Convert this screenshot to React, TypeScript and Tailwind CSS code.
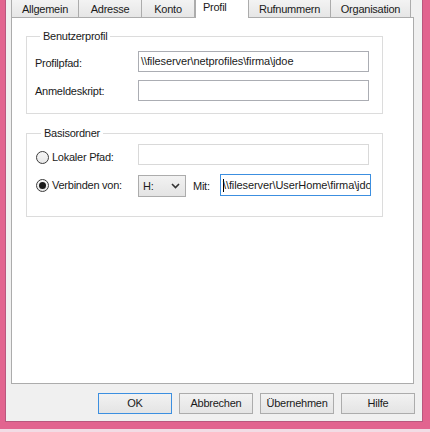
import React from "react";

const font = "font-['Liberation_Sans',Arial,sans-serif] text-[11px] tracking-[-0.25px] text-[#1a1a1a]";

function Tab({ label, w, active }: { label: string; w: string; active?: boolean }) {
  if (active) {
    return (
      <div
        className={`${w} h-[18px] -mb-px relative z-10 bg-white border-x border-[#acacac] flex justify-start pl-[7px] pt-[1px] leading-[13px]`}
      >
        {label}
      </div>
    );
  }
  return (
    <div
      className={`${w} h-[17px] bg-gradient-to-b from-[#f3f3f3] to-[#e6e6e6] border-r border-[#acacac] flex justify-center pt-[3px] leading-[13px]`}
    >
      {label}
    </div>
  );
}

function TextBox({ value, w, disabled }: { value?: string; w: string; disabled?: boolean }) {
  return (
    <div
      className={`${w} h-[21px] bg-white border ${disabled ? "border-[#d9d9d9]" : "border-[#abadb3]"} flex items-center pl-[2px] leading-[13px] tracking-[-0.1px] overflow-hidden whitespace-nowrap`}
    >
      {value}
    </div>
  );
}

function Radio({ checked }: { checked?: boolean }) {
  return (
    <div className="w-[13px] h-[13px] rounded-full border border-[#3c3c3c] bg-gradient-to-b from-[#f6f6f6] to-[#e8e8e8] flex items-center justify-center shrink-0">
      {checked ? <div className="w-[7px] h-[7px] rounded-full bg-[#1a1a1a]" /> : null}
    </div>
  );
}

function Button({ label, def }: { label: string; def?: boolean }) {
  return (
    <div
      className={`w-[74px] h-[21px] border ${def ? "border-[#3c8fe0]" : "border-[#acacac]"} bg-gradient-to-b from-[#f2f2f2] to-[#e4e4e4] flex items-center justify-center leading-[13px]`}
    >
      {label}
    </div>
  );
}

export default function App() {
  return (
    <div className={`w-[430px] h-[432px] bg-[#e2648f] flex flex-col ${font}`}>
      <div className="ml-[5px] w-[418px] h-[422px] bg-[#f0f0f0] border-x border-b border-[#b9587e] flex flex-col">
        <div className="pl-[5px] flex flex-col">
          {/* Tabs */}
          <div className="flex items-end h-[17px]">
            <div className="border-l border-[#acacac] h-[17px]" />
            <Tab label="Allgemein" w="w-[67px]" />
            <Tab label="Adresse" w="w-[63px]" />
            <Tab label="Konto" w="w-[53px]" />
            <Tab label="Profil" w="w-[54px]" active />
            <Tab label="Rufnummern" w="w-[82px]" />
            <Tab label="Organisation" w="w-[80px]" />
          </div>
          {/* Panel */}
          <div className="w-[403px] h-[367px] bg-white border border-[#acacac] flex flex-col pl-[14px]">
            <fieldset className="w-[357px] mt-[12px] border border-[#dcdcdc] pl-[8px] pt-[8px] pb-[12px] flex flex-col gap-[8px]">
              <legend className="ml-[5px] px-[3px] leading-[13px]">Benutzerprofil</legend>
              <div className="flex items-center">
                <div className="w-[103px] pt-[3px] leading-[13px]">Profilpfad:</div>
                <TextBox w="w-[231px]" value={"\\\\fileserver\\netprofiles\\firma\\jdoe"} />
              </div>
              <div className="flex items-center">
                <div className="w-[103px] pt-[2px] leading-[13px]">Anmeldeskript:</div>
                <TextBox w="w-[231px]" />
              </div>
            </fieldset>
            <fieldset className="w-[357px] mt-[13px] border border-[#dcdcdc] pl-[9px] pt-[4px] pb-[19px] flex flex-col gap-[8px]">
              <legend className="ml-[5px] px-[3px] leading-[13px]">Basisordner</legend>
              <div className="flex items-center">
                <div className="w-[102px] flex items-center gap-[3px] pt-[5px]">
                  <Radio />
                  <span className="leading-[13px]">Lokaler Pfad:</span>
                </div>
                <TextBox w="w-[231px]" disabled />
              </div>
              <div className="flex items-center">
                <div className="w-[102px] flex items-center gap-[3px] pt-[1px]">
                  <Radio checked />
                  <span className="leading-[13px]">Verbinden von:</span>
                </div>
                <div className="w-[48px] h-[22px] mt-[2px] border border-[#acacac] bg-gradient-to-b from-[#f2f2f2] to-[#e4e4e4] flex items-center pl-[4px] pr-[5px] justify-between">
                  <span className="leading-[13px]">H:</span>
                  <svg width="9" height="6" viewBox="0 0 9 6">
                    <polyline points="1,1 4.5,4.5 8,1" fill="none" stroke="#333" strokeWidth="1.6" />
                  </svg>
                </div>
                <div className="ml-[7px] w-[27px] pt-[2px] leading-[13px]">Mit:</div>
                <div className="w-[151px] h-[22px] bg-white border border-[#3c8fe0] flex items-center pl-[2px] overflow-hidden whitespace-nowrap leading-[13px] tracking-[-0.1px]">
                  <span className="w-px h-[13px] bg-black mr-[-1px] shrink-0" />
                  <span>{"\\\\fileserver\\UserHome\\firma\\jdoe"}</span>
                </div>
              </div>
            </fieldset>
          </div>
        </div>
        {/* Buttons */}
        <div className="flex justify-end gap-[7px] pr-[7px] mt-[9px]">
          <Button label="OK" def />
          <Button label="Abbrechen" />
          <Button label="Übernehmen" />
          <Button label="Hilfe" />
        </div>
      </div>
      <div className="h-[7px]" />
      <div className="flex-1 bg-[#f2dce5]" />
    </div>
  );
}
